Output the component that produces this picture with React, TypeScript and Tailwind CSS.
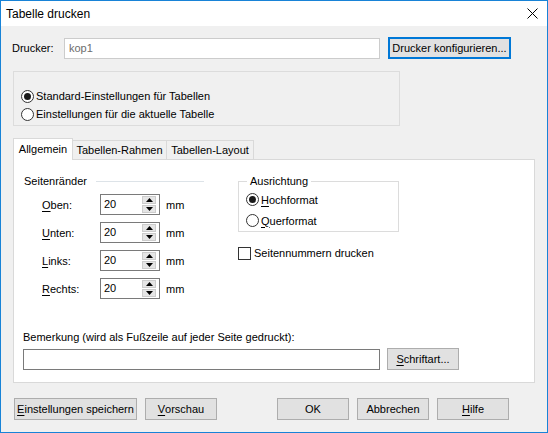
import type { ReactNode } from "react";

function U({ children }: { children: ReactNode }) {
  return <span className="underline underline-offset-2">{children}</span>;
}

function Radio({ checked, children }: { checked?: boolean; children: ReactNode }) {
  return (
    <div className="flex items-center h-[18px] whitespace-nowrap">
      <span className="w-[13px] h-[13px] rounded-full border border-[#333333] bg-white flex items-center justify-center shrink-0">
        {checked && <span className="w-[7px] h-[7px] rounded-full bg-[#1a1a1a]" />}
      </span>
      <span className="ml-[2px]">{children}</span>
    </div>
  );
}

function Spinner() {
  return (
    <div className="w-[60px] h-[21px] border border-[#7a7a7a] bg-white flex items-center">
      <span className="flex-1 pl-[3px] leading-none">20</span>
      <div className="flex flex-col gap-[1px] mr-[3px]">
        <div className="w-[14px] h-[8px] bg-[#e5e5e5] border border-[#cccccc] flex items-center justify-center">
          <svg width="7" height="4" viewBox="0 0 7 4">
            <path d="M0 4 L3.5 0 L7 4 Z" fill="#000" />
          </svg>
        </div>
        <div className="w-[14px] h-[8px] bg-[#e5e5e5] border border-[#cccccc] flex items-center justify-center">
          <svg width="7" height="4" viewBox="0 0 7 4">
            <path d="M0 0 L3.5 4 L7 0 Z" fill="#000" />
          </svg>
        </div>
      </div>
    </div>
  );
}

function MarginRow({ label }: { label: ReactNode }) {
  return (
    <div className="flex items-center h-[21px]">
      <span className="ml-[18px] w-[58px]">{label}</span>
      <Spinner />
      <span className="ml-[6px]">mm</span>
    </div>
  );
}

function Button({ w, children, className = "" }: { w: string; children: ReactNode; className?: string }) {
  return (
    <button
      className={`${w} h-[22px] border border-[#adadad] bg-[#e1e1e1] flex items-center justify-center whitespace-nowrap ${className}`}
    >
      {children}
    </button>
  );
}

export default function App() {
  return (
    <div className="w-[548px] h-[433px] border border-[#1883d7] bg-[#f0f0f0] flex flex-col text-[11px] leading-[16px] text-black font-['Liberation_Sans',Arial,sans-serif] overflow-hidden">
      {/* title bar */}
      <div className="h-[25px] bg-white flex items-center justify-between pl-[5px] pr-[9px] shrink-0">
        <span className="text-[12px]">Tabelle drucken</span>
        <svg width="11" height="11" viewBox="0 0 11 11">
          <path d="M0.5 0.5 L10.5 10.5 M10.5 0.5 L0.5 10.5" stroke="#000" strokeWidth="1" />
        </svg>
      </div>

      {/* printer row */}
      <div className="flex items-center mt-[11px] ml-[11px] h-[22px]">
        <span className="w-[52px]">Drucker:</span>
        <div className="w-[316px] h-[21px] border border-[#cccccc] bg-white text-[#6d6d6d] pl-[4px] flex items-center">
          kop1
        </div>
        <button className="ml-[8px] w-[123px] h-[22px] border-2 border-[#0078d7] bg-[#e1e1e1] flex items-center justify-center whitespace-nowrap">
          Drucker konfigurieren...
        </button>
      </div>

      {/* settings choice */}
      <div className="mt-[12px] ml-[12px] w-[387px] h-[55px] border border-[#dcdcdc] pl-[7px] pt-[15px] flex flex-col">
        <Radio checked>Standard-Einstellungen für Tabellen</Radio>
        <Radio>Einstellungen für die aktuelle Tabelle</Radio>
      </div>

      {/* tabs */}
      <div className="mt-[12px] ml-[12px] h-[21px] flex items-end relative z-10 whitespace-nowrap">
        <div className="w-[60px] h-[22px] -mb-px border border-b-0 border-[#d9d9d9] bg-white flex items-start justify-center pt-[2px]">
          Allgemein
        </div>
        <div className="w-[95px] h-[19px] -ml-px border border-b-0 border-[#d9d9d9] bg-[#f0f0f0] flex items-center justify-center">
          Tabellen-Rahmen
        </div>
        <div className="w-[88px] h-[19px] -ml-px border border-b-0 border-[#d9d9d9] bg-[#f0f0f0] flex items-center justify-center">
          Tabellen-Layout
        </div>
      </div>

      <div className="ml-[12px] w-[522px] h-[224px] border border-[#d9d9d9] bg-white flex flex-col">
        <div className="flex">
          {/* left column */}
          <div className="ml-[10px] w-[180px] pt-[13px] flex flex-col">
            <div className="flex items-center h-[16px]">
              <span>Seitenränder</span>
              <div className="flex-1 ml-[9px] h-px bg-[#dde3e8]" />
            </div>
            <div className="mt-[5px] flex flex-col gap-[7px]">
              <MarginRow label={<><U>O</U>ben:</>} />
              <MarginRow label={<><U>U</U>nten:</>} />
              <MarginRow label={<><U>L</U>inks:</>} />
              <MarginRow label={<><U>R</U>echts:</>} />
            </div>
          </div>

          {/* right column */}
          <div className="ml-[34px] pt-[13px] flex flex-col">
            <fieldset className="w-[161px] h-[59px] border border-[#dcdcdc] m-0 p-0 pl-[7px]">
              <legend className="ml-[1px] px-[3px] leading-[16px]">Ausrichtung</legend>
              <div className="flex flex-col">
                <div className="h-[21px] flex items-center">
                  <Radio checked>
                    <U>H</U>ochformat
                  </Radio>
                </div>
                <div className="h-[21px] flex items-center">
                  <Radio>
                    <U>Q</U>uerformat
                  </Radio>
                </div>
              </div>
            </fieldset>
            <div className="mt-[13px] h-[16px] flex items-center whitespace-nowrap">
              <span className="w-[13px] h-[13px] border border-[#333333] bg-white shrink-0" />
              <span className="ml-[3px]">Seitennummern drucken</span>
            </div>
          </div>
        </div>

        {/* remark */}
        <div className="mt-auto ml-[9px] pb-[12px] flex flex-col">
          <span className="h-[16px] flex items-center">Bemerkung (wird als Fußzeile auf jeder Seite gedruckt):</span>
          <div className="mt-[3px] flex items-center gap-[7px]">
            <div className="w-[357px] h-[21px] border border-[#7a7a7a] bg-white" />
            <Button w="w-[72px]">
              <U>S</U>chriftart...
            </Button>
          </div>
        </div>
      </div>

      {/* bottom buttons */}
      <div className="mt-[15px] ml-[13px] flex items-center">
        <Button w="w-[123px]">
          <U>E</U>instellungen speichern
        </Button>
        <Button w="w-[72px]" className="ml-[8px]">
          <U>V</U>orschau
        </Button>
        <Button w="w-[72px]" className="ml-[60px]">
          OK
        </Button>
        <Button w="w-[72px]" className="ml-[8px]">
          Abbrechen
        </Button>
        <Button w="w-[72px]" className="ml-[8px]">
          <U>H</U>ilfe
        </Button>
      </div>
    </div>
  );
}
